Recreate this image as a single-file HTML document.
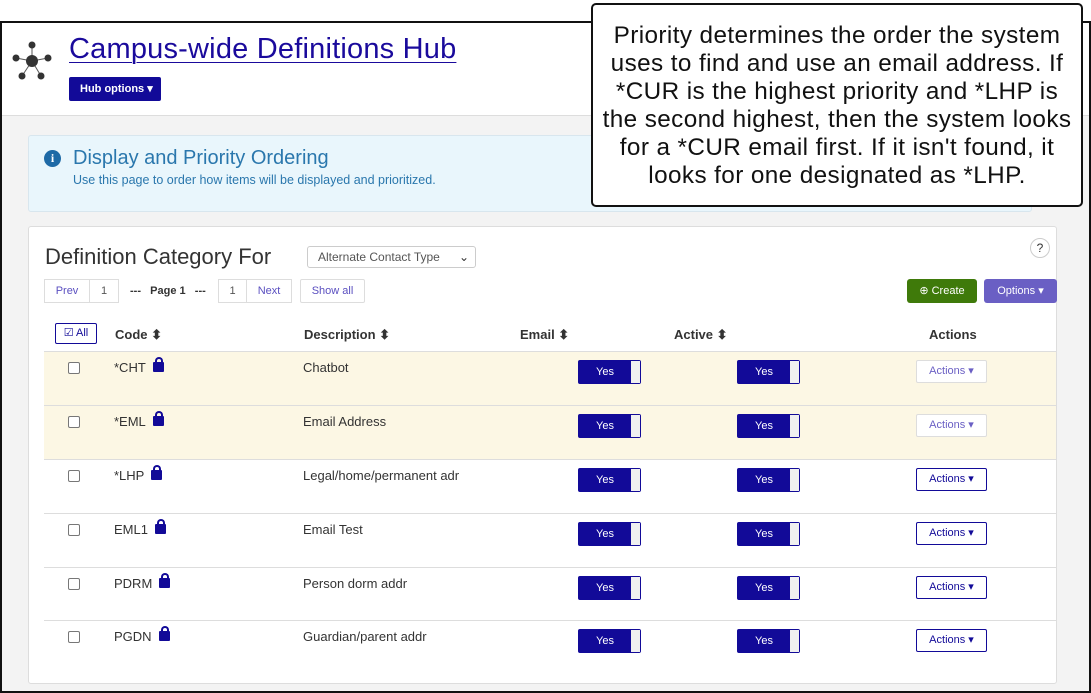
<!DOCTYPE html>
<html><head><meta charset="utf-8"><style>
*{box-sizing:border-box;margin:0;padding:0}
body{width:1091px;height:693px;background:#fff;font-family:"Liberation Sans",Arial,sans-serif;position:relative;overflow:hidden;color:#333}
.frame{position:absolute;left:0;top:21px;width:1091px;height:672px;border:2px solid #111;background:#f3f3f3;overflow:hidden}
.hdr{position:absolute;left:0;top:0;width:100%;height:93px;background:#fff;border-bottom:1px solid #ddd}
.title{position:absolute;left:67px;top:10px;font-size:29px;color:#1a0a9c;text-decoration:underline;text-decoration-thickness:1px;text-underline-offset:4px;letter-spacing:0.2px}
.hub{position:absolute;left:67px;top:54px;width:92px;height:24px;background:#120a98;color:#fff;font-size:11px;font-weight:bold;border-radius:2px;line-height:24px;padding-left:11px}
.info{position:absolute;left:26px;top:112px;width:1004px;height:77px;background:#e9f6fc;border:1px solid #d8e6ee;border-radius:3px}
.info h2{position:absolute;left:44px;top:11px;font-weight:normal;font-size:20px;color:#2a77ad}
.info p{position:absolute;left:44px;top:37px;font-size:12.5px;color:#2a77ad}
.icn{position:absolute;left:15px;top:14px;width:17px;height:17px;border-radius:50%;background:#1e6aa6;color:#fff;font-size:12px;font-weight:bold;text-align:center;line-height:17px;font-family:"Liberation Serif",serif}
.card{position:absolute;left:26px;top:203px;width:1029px;height:458px;background:#fff;border:1px solid #ddd;border-radius:3px}
.dc{position:absolute;left:16px;top:17px;font-size:22px;color:#333}
.sel{position:absolute;left:278px;top:19px;width:169px;height:22px;border:1px solid #ccc;border-radius:3px;font-size:12px;color:#555;line-height:20px;padding-left:10px}
.pg{position:absolute;top:52px;height:24px;border:1px solid #ddd;font-size:11px;color:#5a4fc0;line-height:22px;text-align:center;background:#fff}
.btn{position:absolute;top:52px;height:24px;border-radius:3px;color:#fff;font-size:11px;line-height:24px;text-align:center}
.th{position:absolute;top:100px;font-size:13px;font-weight:bold;color:#333}
.row{position:absolute;left:15px;width:1012px;height:54px;border-top:1px solid #ddd}
.cb{position:absolute;left:24px;top:10px;width:12px;height:12px;border:1px solid #777;border-radius:2px;background:#fff}
.code{position:absolute;left:70px;top:8px;font-size:13px;color:#333}
.lock{display:inline-block;width:11px;height:10px;background:#120a98;border-radius:1px;margin-left:7px;position:relative;top:0}
.lock:before{content:"";position:absolute;left:2px;top:-5px;width:4px;height:6px;border:2px solid #120a98;border-bottom:none;border-radius:4px 4px 0 0}
.desc{position:absolute;left:259px;top:8px;font-size:13px;color:#333}
.tg{position:absolute;top:8px;width:63px;height:24px;background:#120a98;border:1px solid #120a98;border-radius:2px;color:#fff;font-size:11px;line-height:22px}
.tg span{position:absolute;left:0;width:52px;text-align:center}
.tg i{position:absolute;right:0;top:0;width:9px;height:22px;background:#f0f0f0}
.act{position:absolute;left:872px;top:8px;width:71px;height:23px;border:1px solid #120a98;border-radius:2px;font-size:11px;color:#120a98;line-height:21px;text-align:center;background:#fff}
.tip{position:absolute;left:591px;top:3px;width:492px;height:204px;background:#fff;border:2px solid #111;border-radius:5px;font-size:24.3px;letter-spacing:0.4px;line-height:28px;text-align:center;color:#111;padding-top:17px;z-index:5;white-space:nowrap}
</style></head><body>
<div class="frame">
 <div class="hdr">
  <svg style="position:absolute;left:9px;top:17px" width="42" height="42" viewBox="0 0 42 42">
   <g stroke="#555" stroke-width="1"><line x1="21" y1="21" x2="21" y2="5"/><line x1="21" y1="21" x2="5" y2="18"/><line x1="21" y1="21" x2="37" y2="18"/><line x1="21" y1="21" x2="11" y2="36"/><line x1="21" y1="21" x2="30" y2="36"/></g>
   <g fill="#333"><circle cx="21" cy="21" r="6"/><circle cx="21" cy="5" r="3.5"/><circle cx="5" cy="18" r="3.5"/><circle cx="37" cy="18" r="3.5"/><circle cx="11" cy="36" r="3.5"/><circle cx="30" cy="36" r="3.5"/></g>
  </svg>
  <div class="title">Campus-wide Definitions Hub</div>
  <div class="hub">Hub options ▾</div>
 </div>
 <div class="info"><div class="icn">i</div><h2>Display and Priority Ordering</h2><p>Use this page to order how items will be displayed and prioritized.</p></div>
 <div class="card">
  <div class="dc">Definition Category For</div>
  <div class="sel">Alternate Contact Type <span style="position:absolute;right:6px;color:#333">⌄</span></div>
  <div style="position:absolute;right:6px;top:11px;width:20px;height:20px;border:1px solid #ccc;border-radius:50%;font-size:12px;text-align:center;line-height:18px;color:#333">?</div>
  <div class="pg" style="left:15px;width:46px">Prev</div>
  <div class="pg" style="left:60px;width:30px;color:#555">1</div>
  <div style="position:absolute;left:101px;top:58px;font-size:11px;font-weight:bold;color:#333">---&nbsp;&nbsp; Page 1 &nbsp;&nbsp;---</div>
  <div class="pg" style="left:189px;width:29px;color:#555">1</div>
  <div class="pg" style="left:217px;width:46px">Next</div>
  <div class="pg" style="left:271px;width:65px;border-radius:2px">Show all</div>
  <div class="btn" style="left:878px;width:70px;background:#3f7a0a">⊕ Create</div>
  <div class="btn" style="left:955px;width:73px;background:#6a5fc4">Options ▾</div>
  <div style="position:absolute;left:26px;top:96px;width:42px;height:21px;border:1px solid #120a98;border-radius:2px;font-size:11px;color:#120a98;text-align:center;line-height:19px">☑ All</div>
  <div class="th" style="left:86px">Code ⬍</div>
  <div class="th" style="left:275px">Description ⬍</div>
  <div class="th" style="left:491px">Email ⬍</div>
  <div class="th" style="left:645px">Active ⬍</div>
  <div class="th" style="left:900px">Actions</div>

  <div class="row" style="top:124px;background:#fcf7e4"><div class="cb"></div><div class="code">*CHT<span class="lock"></span></div><div class="desc">Chatbot</div><div class="tg" style="left:534px"><span>Yes</span><i></i></div><div class="tg" style="left:693px"><span>Yes</span><i></i></div><div class="act" style="border-color:#ddd;color:#6a5fc4">Actions ▾</div></div>
  <div class="row" style="top:178px;background:#fcf7e4"><div class="cb"></div><div class="code">*EML<span class="lock"></span></div><div class="desc">Email Address</div><div class="tg" style="left:534px"><span>Yes</span><i></i></div><div class="tg" style="left:693px"><span>Yes</span><i></i></div><div class="act" style="border-color:#ddd;color:#6a5fc4">Actions ▾</div></div>
  <div class="row" style="top:232px"><div class="cb"></div><div class="code">*LHP<span class="lock"></span></div><div class="desc">Legal/home/permanent adr</div><div class="tg" style="left:534px"><span>Yes</span><i></i></div><div class="tg" style="left:693px"><span>Yes</span><i></i></div><div class="act">Actions ▾</div></div>
  <div class="row" style="top:286px"><div class="cb"></div><div class="code">EML1<span class="lock"></span></div><div class="desc">Email Test</div><div class="tg" style="left:534px"><span>Yes</span><i></i></div><div class="tg" style="left:693px"><span>Yes</span><i></i></div><div class="act">Actions ▾</div></div>
  <div class="row" style="top:340px"><div class="cb"></div><div class="code">PDRM<span class="lock"></span></div><div class="desc">Person dorm addr</div><div class="tg" style="left:534px"><span>Yes</span><i></i></div><div class="tg" style="left:693px"><span>Yes</span><i></i></div><div class="act">Actions ▾</div></div>
  <div class="row" style="top:393px"><div class="cb"></div><div class="code">PGDN<span class="lock"></span></div><div class="desc">Guardian/parent addr</div><div class="tg" style="left:534px"><span>Yes</span><i></i></div><div class="tg" style="left:693px"><span>Yes</span><i></i></div><div class="act">Actions ▾</div></div>
 </div>
</div>
<div class="tip">Priority determines the order the system<br>uses to find and use an email address. If<br>*CUR is the highest priority and *LHP is<br>the second highest, then the system looks<br>for a *CUR email first. If it isn't found, it<br>looks for one designated as *LHP.</div>
</body></html>
